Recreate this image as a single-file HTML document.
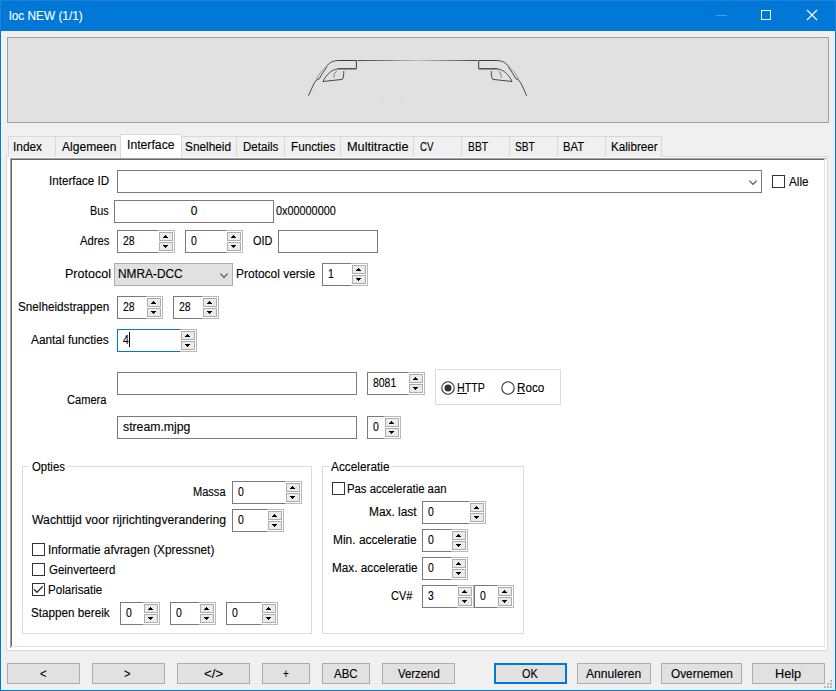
<!DOCTYPE html>
<html><head><meta charset="utf-8"><title>loc NEW</title>
<style>
html,body{margin:0;padding:0;}
body{width:836px;height:691px;position:relative;overflow:hidden;background:#f0f0f0;font-family:"Liberation Sans",sans-serif;font-size:12px;}
.a{position:absolute;}
.t{position:absolute;white-space:nowrap;line-height:14px;font-size:12px;-webkit-text-stroke:0.12px currentColor;}
svg.a{overflow:visible;}
</style></head><body>
<div class="a" style="left:0px;top:0px;width:836px;height:31px;background:#0078d7"></div>
<div class="a" style="left:0px;top:0px;width:1px;height:691px;background:#0078d7"></div>
<div class="a" style="left:835px;top:0px;width:1px;height:691px;background:#0078d7"></div>
<div class="a" style="left:0px;top:690px;width:836px;height:1px;background:#0078d7"></div>
<div class="a" style="left:0px;top:0px;width:836px;height:1px;background:#1e82d9"></div>
<div class="a" style="left:0px;top:0px;width:1px;height:31px;background:#1e82d9"></div>
<div class="a" style="left:835px;top:0px;width:1px;height:31px;background:#1e82d9"></div>
<div class="t" style="left:8.80px;top:8.8px;color:#fff;transform:scaleX(0.9877);transform-origin:0 0">loc NEW (1/1)</div>
<div class="a" style="left:716px;top:15px;width:11px;height:1px;background:#4f9be0"></div>
<div class="a" style="left:761px;top:10px;width:10px;height:10px;box-sizing:border-box;border:1px solid #fff;background:transparent;"></div>
<svg class="a" style="left:806px;top:9px" width="12" height="12"><path d="M1 1 L11 11 M11 1 L1 11" stroke="#fff" stroke-width="1.15"/></svg>
<div class="a" style="left:7px;top:37px;width:822px;height:86px;box-sizing:border-box;border:1px solid #a0a0a0;background:#e1e1e1;"></div>
<svg class="a" style="left:0;top:0" width="836" height="130">
<defs><linearGradient id="cl" x1="357" y1="0" x2="478" y2="0" gradientUnits="userSpaceOnUse">
<stop offset="0" stop-color="#444"/><stop offset="0.5" stop-color="#bdbdbd"/><stop offset="1" stop-color="#444"/></linearGradient></defs>
<path d="M357.5 60.5 H477.7" stroke="url(#cl)" stroke-width="1" fill="none"/>
<g id="half" fill="none" stroke="#3c3c3c" stroke-width="1">
<path d="M338 60.5 H356.4 V68.6"/>
<path d="M356.4 68.8 H338" stroke-width="1.3"/>
<path d="M338 68.9 C332 69.5 326.5 74 323 81.5 L342.3 79.4 C343.5 78 343.8 75 343.8 71" stroke="#484848"/>
<path d="M338 60.5 C333 60.8 329 62.5 326.6 66.4" stroke-width="0.9"/>
<path d="M326.6 66.4 C324.5 68 322 70.5 320.3 72.8 L317.2 77.4 L316.6 79.4" stroke="#8a8a8a" stroke-width="0.9"/>
<path d="M326.8 66.6 C325.5 69 323.5 71.8 321.2 75.3 L319.3 78.8 L317 79.5 L314.4 82.8 C312.5 86.5 310.5 91 308.5 95.7" stroke-width="0.95"/>
<path d="M336.8 71 C334.8 72.3 333.9 74 333.9 77.6" stroke="#707070" stroke-width="0.9"/>
</g>
<use href="#half" transform="translate(835.1,0) scale(-1,1)"/>
</svg>
<div class="a" style="left:381px;top:98px;width:5px;height:1px;background:#dadada"></div>
<div class="a" style="left:398px;top:98px;width:5px;height:1px;background:#dadada"></div>
<div class="a" style="left:6px;top:156px;width:822px;height:495px;box-sizing:border-box;border:1px solid #d9d9d9;background:#fff;"></div>
<div class="a" style="left:8px;top:136px;width:48px;height:21px;box-sizing:border-box;border:1px solid #d9d9d9;border-bottom:none;background:#f0f0f0"></div>
<div class="t" style="left:13.30px;top:139.8px;color:#000;transform:scaleX(0.9893);transform-origin:0 0">Index</div>
<div class="a" style="left:55px;top:136px;width:66px;height:21px;box-sizing:border-box;border:1px solid #d9d9d9;border-bottom:none;background:#f0f0f0"></div>
<div class="t" style="left:62.00px;top:139.8px;color:#000;transform:scaleX(1.0057);transform-origin:0 0">Algemeen</div>
<div class="a" style="left:181px;top:136px;width:56px;height:21px;box-sizing:border-box;border:1px solid #d9d9d9;border-bottom:none;background:#f0f0f0"></div>
<div class="t" style="left:185.20px;top:139.8px;color:#000;transform:scaleX(0.9867);transform-origin:0 0">Snelheid</div>
<div class="a" style="left:236px;top:136px;width:49px;height:21px;box-sizing:border-box;border:1px solid #d9d9d9;border-bottom:none;background:#f0f0f0"></div>
<div class="t" style="left:242.50px;top:139.8px;color:#000;transform:scaleX(0.9639);transform-origin:0 0">Details</div>
<div class="a" style="left:284px;top:136px;width:57px;height:21px;box-sizing:border-box;border:1px solid #d9d9d9;border-bottom:none;background:#f0f0f0"></div>
<div class="t" style="left:290.70px;top:139.8px;color:#000;transform:scaleX(0.9773);transform-origin:0 0">Functies</div>
<div class="a" style="left:340px;top:136px;width:74px;height:21px;box-sizing:border-box;border:1px solid #d9d9d9;border-bottom:none;background:#f0f0f0"></div>
<div class="t" style="left:346.60px;top:139.8px;color:#000;transform:scaleX(1.0596);transform-origin:0 0">Multitractie</div>
<div class="a" style="left:413px;top:136px;width:49px;height:21px;box-sizing:border-box;border:1px solid #d9d9d9;border-bottom:none;background:#f0f0f0"></div>
<div class="t" style="left:420.40px;top:139.8px;color:#000;transform:scaleX(0.8118);transform-origin:0 0">CV</div>
<div class="a" style="left:461px;top:136px;width:49px;height:21px;box-sizing:border-box;border:1px solid #d9d9d9;border-bottom:none;background:#f0f0f0"></div>
<div class="t" style="left:468.00px;top:139.8px;color:#000;transform:scaleX(0.8591);transform-origin:0 0">BBT</div>
<div class="a" style="left:509px;top:136px;width:49px;height:21px;box-sizing:border-box;border:1px solid #d9d9d9;border-bottom:none;background:#f0f0f0"></div>
<div class="t" style="left:514.90px;top:139.8px;color:#000;transform:scaleX(0.8500);transform-origin:0 0">SBT</div>
<div class="a" style="left:557px;top:136px;width:49px;height:21px;box-sizing:border-box;border:1px solid #d9d9d9;border-bottom:none;background:#f0f0f0"></div>
<div class="t" style="left:563.40px;top:139.8px;color:#000;transform:scaleX(0.9381);transform-origin:0 0">BAT</div>
<div class="a" style="left:605px;top:136px;width:57px;height:21px;box-sizing:border-box;border:1px solid #d9d9d9;border-bottom:none;background:#f0f0f0"></div>
<div class="t" style="left:611.30px;top:139.8px;color:#000;transform:scaleX(0.9723);transform-origin:0 0">Kalibreer</div>
<div class="a" style="left:120px;top:134px;width:62px;height:24px;box-sizing:border-box;border:1px solid #d9d9d9;border-bottom:none;background:#fff"></div>
<div class="t" style="left:127.20px;top:137.8px;color:#000;transform:scaleX(1.0178);transform-origin:0 0">Interface</div>
<div class="a" style="left:10px;top:158px;width:816px;height:490px;box-sizing:border-box;border-top:2px solid #696969;border-left:2px solid #696969;border-right:1px solid #fff;border-bottom:1px solid #fff;background:#fff"></div>
<div class="a" style="left:10px;top:158px;width:816px;height:1px;background:#a0a0a0"></div>
<div class="a" style="left:10px;top:158px;width:1px;height:490px;background:#a0a0a0"></div>
<div class="a" style="left:824px;top:159px;width:1px;height:488px;background:#e3e3e3"></div>
<div class="a" style="left:11px;top:646px;width:814px;height:1px;background:#e3e3e3"></div>
<div class="t" style="left:49.20px;top:173.8px;color:#000;transform:scaleX(0.9689);transform-origin:0 0">Interface ID</div>
<div class="a" style="left:117px;top:170px;width:645px;height:23px;box-sizing:border-box;border:1px solid #7a7a7a;background:#fff;"></div>
<svg class="a" style="left:749px;top:179.5px" width="9" height="6"><path d="M0.4 0.6 L4.0 4.4 L7.6 0.6" fill="none" stroke="#555" stroke-width="1.25"/></svg>
<div class="a" style="left:772px;top:175px;width:13px;height:13px;box-sizing:border-box;border:1px solid #333;background:#fff;"></div>
<div class="t" style="left:788.50px;top:174.8px;color:#000;transform:scaleX(0.9750);transform-origin:0 0">Alle</div>
<div class="t" style="left:90.30px;top:203.8px;color:#000;transform:scaleX(0.9000);transform-origin:0 0">Bus</div>
<div class="a" style="left:114px;top:200px;width:160px;height:23px;box-sizing:border-box;border:1px solid #7a7a7a;background:#fff;"></div>
<div class="t" style="left:-6px;width:400px;top:203.8px;text-align:center;color:#000;">0</div>
<div class="t" style="left:276.30px;top:203.8px;color:#000;transform:scaleX(0.9045);transform-origin:0 0">0x00000000</div>
<div class="t" style="left:80.00px;top:233.8px;color:#000;transform:scaleX(0.9355);transform-origin:0 0">Adres</div>
<div class="a" style="left:117px;top:230px;width:58px;height:23px;background:#fff"></div>
<div class="a" style="left:117px;top:230px;width:41px;height:1px;background:#7a7a7a"></div>
<div class="a" style="left:117px;top:252px;width:41px;height:1px;background:#7a7a7a"></div>
<div class="a" style="left:117px;top:230px;width:1px;height:23px;background:#7a7a7a"></div>
<div class="a" style="left:158px;top:230px;width:17px;height:1px;background:#b9b9b9"></div>
<div class="a" style="left:158px;top:252px;width:17px;height:1px;background:#b9b9b9"></div>
<div class="a" style="left:174px;top:230px;width:1px;height:23px;background:#b9b9b9"></div>
<div class="a" style="left:159px;top:232px;width:14px;height:9px;box-sizing:border-box;border:1px solid #adadad;background:#ebebeb;"></div>
<div class="a" style="left:159px;top:242px;width:14px;height:9px;box-sizing:border-box;border:1px solid #adadad;background:#ebebeb;"></div>
<div class="a" style="left:165px;top:235px;width:1px;height:1px;background:#000"></div>
<div class="a" style="left:164px;top:236px;width:3px;height:1px;background:#000"></div>
<div class="a" style="left:163px;top:237px;width:5px;height:1px;background:#000"></div>
<div class="a" style="left:163px;top:245px;width:5px;height:1px;background:#000"></div>
<div class="a" style="left:164px;top:246px;width:3px;height:1px;background:#000"></div>
<div class="a" style="left:165px;top:247px;width:1px;height:1px;background:#000"></div>
<div class="t" style="left:123px;top:233.8px;color:#000;transform:scaleX(0.87);transform-origin:0 0">28</div>
<div class="a" style="left:185px;top:230px;width:58px;height:23px;background:#fff"></div>
<div class="a" style="left:185px;top:230px;width:41px;height:1px;background:#7a7a7a"></div>
<div class="a" style="left:185px;top:252px;width:41px;height:1px;background:#7a7a7a"></div>
<div class="a" style="left:185px;top:230px;width:1px;height:23px;background:#7a7a7a"></div>
<div class="a" style="left:226px;top:230px;width:17px;height:1px;background:#b9b9b9"></div>
<div class="a" style="left:226px;top:252px;width:17px;height:1px;background:#b9b9b9"></div>
<div class="a" style="left:242px;top:230px;width:1px;height:23px;background:#b9b9b9"></div>
<div class="a" style="left:227px;top:232px;width:14px;height:9px;box-sizing:border-box;border:1px solid #adadad;background:#ebebeb;"></div>
<div class="a" style="left:227px;top:242px;width:14px;height:9px;box-sizing:border-box;border:1px solid #adadad;background:#ebebeb;"></div>
<div class="a" style="left:233px;top:235px;width:1px;height:1px;background:#000"></div>
<div class="a" style="left:232px;top:236px;width:3px;height:1px;background:#000"></div>
<div class="a" style="left:231px;top:237px;width:5px;height:1px;background:#000"></div>
<div class="a" style="left:231px;top:245px;width:5px;height:1px;background:#000"></div>
<div class="a" style="left:232px;top:246px;width:3px;height:1px;background:#000"></div>
<div class="a" style="left:233px;top:247px;width:1px;height:1px;background:#000"></div>
<div class="t" style="left:191px;top:233.8px;color:#000;transform:scaleX(0.87);transform-origin:0 0">0</div>
<div class="t" style="left:253.40px;top:233.8px;color:#000;transform:scaleX(0.9048);transform-origin:0 0">OID</div>
<div class="a" style="left:278px;top:230px;width:100px;height:23px;box-sizing:border-box;border:1px solid #7a7a7a;background:#fff;"></div>
<div class="t" style="left:64.50px;top:266.8px;color:#000;transform:scaleX(1.0429);transform-origin:0 0">Protocol</div>
<div class="a" style="left:114px;top:263px;width:119px;height:23px;box-sizing:border-box;border:1px solid #adadad;background:#e1e1e1;"></div>
<div class="t" style="left:117.60px;top:266.8px;color:#000;transform:scaleX(0.9891);transform-origin:0 0">NMRA-DCC</div>
<svg class="a" style="left:220px;top:272.5px" width="9" height="6"><path d="M0.4 0.6 L4.0 4.4 L7.6 0.6" fill="none" stroke="#555" stroke-width="1.25"/></svg>
<div class="t" style="left:236.00px;top:266.8px;color:#000;transform:scaleX(0.9974);transform-origin:0 0">Protocol versie</div>
<div class="a" style="left:322px;top:263px;width:46px;height:23px;background:#fff"></div>
<div class="a" style="left:322px;top:263px;width:29px;height:1px;background:#7a7a7a"></div>
<div class="a" style="left:322px;top:285px;width:29px;height:1px;background:#7a7a7a"></div>
<div class="a" style="left:322px;top:263px;width:1px;height:23px;background:#7a7a7a"></div>
<div class="a" style="left:351px;top:263px;width:17px;height:1px;background:#b9b9b9"></div>
<div class="a" style="left:351px;top:285px;width:17px;height:1px;background:#b9b9b9"></div>
<div class="a" style="left:367px;top:263px;width:1px;height:23px;background:#b9b9b9"></div>
<div class="a" style="left:352px;top:265px;width:14px;height:9px;box-sizing:border-box;border:1px solid #adadad;background:#ebebeb;"></div>
<div class="a" style="left:352px;top:275px;width:14px;height:9px;box-sizing:border-box;border:1px solid #adadad;background:#ebebeb;"></div>
<div class="a" style="left:358px;top:268px;width:1px;height:1px;background:#000"></div>
<div class="a" style="left:357px;top:269px;width:3px;height:1px;background:#000"></div>
<div class="a" style="left:356px;top:270px;width:5px;height:1px;background:#000"></div>
<div class="a" style="left:356px;top:278px;width:5px;height:1px;background:#000"></div>
<div class="a" style="left:357px;top:279px;width:3px;height:1px;background:#000"></div>
<div class="a" style="left:358px;top:280px;width:1px;height:1px;background:#000"></div>
<div class="t" style="left:328px;top:266.8px;color:#000;transform:scaleX(0.87);transform-origin:0 0">1</div>
<div class="t" style="left:18.20px;top:299.8px;color:#000;transform:scaleX(0.9761);transform-origin:0 0">Snelheidstrappen</div>
<div class="a" style="left:117px;top:296px;width:46px;height:23px;background:#fff"></div>
<div class="a" style="left:117px;top:296px;width:29px;height:1px;background:#7a7a7a"></div>
<div class="a" style="left:117px;top:318px;width:29px;height:1px;background:#7a7a7a"></div>
<div class="a" style="left:117px;top:296px;width:1px;height:23px;background:#7a7a7a"></div>
<div class="a" style="left:146px;top:296px;width:17px;height:1px;background:#b9b9b9"></div>
<div class="a" style="left:146px;top:318px;width:17px;height:1px;background:#b9b9b9"></div>
<div class="a" style="left:162px;top:296px;width:1px;height:23px;background:#b9b9b9"></div>
<div class="a" style="left:147px;top:298px;width:14px;height:9px;box-sizing:border-box;border:1px solid #adadad;background:#ebebeb;"></div>
<div class="a" style="left:147px;top:308px;width:14px;height:9px;box-sizing:border-box;border:1px solid #adadad;background:#ebebeb;"></div>
<div class="a" style="left:153px;top:301px;width:1px;height:1px;background:#000"></div>
<div class="a" style="left:152px;top:302px;width:3px;height:1px;background:#000"></div>
<div class="a" style="left:151px;top:303px;width:5px;height:1px;background:#000"></div>
<div class="a" style="left:151px;top:311px;width:5px;height:1px;background:#000"></div>
<div class="a" style="left:152px;top:312px;width:3px;height:1px;background:#000"></div>
<div class="a" style="left:153px;top:313px;width:1px;height:1px;background:#000"></div>
<div class="t" style="left:123px;top:299.8px;color:#000;transform:scaleX(0.87);transform-origin:0 0">28</div>
<div class="a" style="left:173px;top:296px;width:46px;height:23px;background:#fff"></div>
<div class="a" style="left:173px;top:296px;width:29px;height:1px;background:#7a7a7a"></div>
<div class="a" style="left:173px;top:318px;width:29px;height:1px;background:#7a7a7a"></div>
<div class="a" style="left:173px;top:296px;width:1px;height:23px;background:#7a7a7a"></div>
<div class="a" style="left:202px;top:296px;width:17px;height:1px;background:#b9b9b9"></div>
<div class="a" style="left:202px;top:318px;width:17px;height:1px;background:#b9b9b9"></div>
<div class="a" style="left:218px;top:296px;width:1px;height:23px;background:#b9b9b9"></div>
<div class="a" style="left:203px;top:298px;width:14px;height:9px;box-sizing:border-box;border:1px solid #adadad;background:#ebebeb;"></div>
<div class="a" style="left:203px;top:308px;width:14px;height:9px;box-sizing:border-box;border:1px solid #adadad;background:#ebebeb;"></div>
<div class="a" style="left:209px;top:301px;width:1px;height:1px;background:#000"></div>
<div class="a" style="left:208px;top:302px;width:3px;height:1px;background:#000"></div>
<div class="a" style="left:207px;top:303px;width:5px;height:1px;background:#000"></div>
<div class="a" style="left:207px;top:311px;width:5px;height:1px;background:#000"></div>
<div class="a" style="left:208px;top:312px;width:3px;height:1px;background:#000"></div>
<div class="a" style="left:209px;top:313px;width:1px;height:1px;background:#000"></div>
<div class="t" style="left:179px;top:299.8px;color:#000;transform:scaleX(0.87);transform-origin:0 0">28</div>
<div class="t" style="left:31.00px;top:332.8px;color:#000;transform:scaleX(0.9873);transform-origin:0 0">Aantal functies</div>
<div class="a" style="left:117px;top:329px;width:80px;height:23px;background:#fff"></div>
<div class="a" style="left:117px;top:329px;width:63px;height:1px;background:#0078d7"></div>
<div class="a" style="left:117px;top:351px;width:63px;height:1px;background:#0078d7"></div>
<div class="a" style="left:117px;top:329px;width:1px;height:23px;background:#0078d7"></div>
<div class="a" style="left:180px;top:329px;width:17px;height:1px;background:#b9b9b9"></div>
<div class="a" style="left:180px;top:351px;width:17px;height:1px;background:#b9b9b9"></div>
<div class="a" style="left:196px;top:329px;width:1px;height:23px;background:#b9b9b9"></div>
<div class="a" style="left:181px;top:331px;width:14px;height:9px;box-sizing:border-box;border:1px solid #adadad;background:#ebebeb;"></div>
<div class="a" style="left:181px;top:341px;width:14px;height:9px;box-sizing:border-box;border:1px solid #adadad;background:#ebebeb;"></div>
<div class="a" style="left:187px;top:334px;width:1px;height:1px;background:#000"></div>
<div class="a" style="left:186px;top:335px;width:3px;height:1px;background:#000"></div>
<div class="a" style="left:185px;top:336px;width:5px;height:1px;background:#000"></div>
<div class="a" style="left:185px;top:344px;width:5px;height:1px;background:#000"></div>
<div class="a" style="left:186px;top:345px;width:3px;height:1px;background:#000"></div>
<div class="a" style="left:187px;top:346px;width:1px;height:1px;background:#000"></div>
<div class="t" style="left:123px;top:332.8px;color:#000;transform:scaleX(0.87);transform-origin:0 0">4</div>
<div class="a" style="left:129px;top:332px;width:1px;height:15px;background:#000"></div>
<div class="t" style="left:66.70px;top:392.8px;color:#000;transform:scaleX(0.9233);transform-origin:0 0">Camera</div>
<div class="a" style="left:117px;top:372px;width:240px;height:23px;box-sizing:border-box;border:1px solid #7a7a7a;background:#fff;"></div>
<div class="a" style="left:367px;top:372px;width:58px;height:23px;background:#fff"></div>
<div class="a" style="left:367px;top:372px;width:41px;height:1px;background:#7a7a7a"></div>
<div class="a" style="left:367px;top:394px;width:41px;height:1px;background:#7a7a7a"></div>
<div class="a" style="left:367px;top:372px;width:1px;height:23px;background:#7a7a7a"></div>
<div class="a" style="left:408px;top:372px;width:17px;height:1px;background:#b9b9b9"></div>
<div class="a" style="left:408px;top:394px;width:17px;height:1px;background:#b9b9b9"></div>
<div class="a" style="left:424px;top:372px;width:1px;height:23px;background:#b9b9b9"></div>
<div class="a" style="left:409px;top:374px;width:14px;height:9px;box-sizing:border-box;border:1px solid #adadad;background:#ebebeb;"></div>
<div class="a" style="left:409px;top:384px;width:14px;height:9px;box-sizing:border-box;border:1px solid #adadad;background:#ebebeb;"></div>
<div class="a" style="left:415px;top:377px;width:1px;height:1px;background:#000"></div>
<div class="a" style="left:414px;top:378px;width:3px;height:1px;background:#000"></div>
<div class="a" style="left:413px;top:379px;width:5px;height:1px;background:#000"></div>
<div class="a" style="left:413px;top:387px;width:5px;height:1px;background:#000"></div>
<div class="a" style="left:414px;top:388px;width:3px;height:1px;background:#000"></div>
<div class="a" style="left:415px;top:389px;width:1px;height:1px;background:#000"></div>
<div class="t" style="left:373px;top:375.8px;color:#000;transform:scaleX(0.87);transform-origin:0 0">8081</div>
<div class="a" style="left:435px;top:369px;width:126px;height:36px;box-sizing:border-box;border:1px solid #dcdcdc;background:transparent;"></div>
<svg class="a" style="left:440.5px;top:380.5px" width="14" height="14"><circle cx="7" cy="7" r="6.2" fill="#fff" stroke="#333" stroke-width="1.1"/><circle cx="7" cy="7" r="3.5" fill="#333"/></svg>
<div class="t" style="left:456.70px;top:380.8px;color:#000;transform:scaleX(0.8867);transform-origin:0 0">HTTP</div>
<div class="a" style="left:457px;top:393px;width:10px;height:1px;background:#000"></div>
<svg class="a" style="left:500.5px;top:380.5px" width="14" height="14"><circle cx="7" cy="7" r="6.2" fill="#fff" stroke="#333" stroke-width="1.1"/></svg>
<div class="t" style="left:516.50px;top:380.8px;color:#000;transform:scaleX(0.9741);transform-origin:0 0">Roco</div>
<div class="a" style="left:517px;top:393px;width:8px;height:1px;background:#000"></div>
<div class="a" style="left:117px;top:416px;width:240px;height:23px;box-sizing:border-box;border:1px solid #7a7a7a;background:#fff;"></div>
<div class="t" style="left:123.20px;top:419.8px;color:#000;transform:scaleX(1.0215);transform-origin:0 0">stream.mjpg</div>
<div class="a" style="left:367px;top:416px;width:34px;height:23px;background:#fff"></div>
<div class="a" style="left:367px;top:416px;width:17px;height:1px;background:#7a7a7a"></div>
<div class="a" style="left:367px;top:438px;width:17px;height:1px;background:#7a7a7a"></div>
<div class="a" style="left:367px;top:416px;width:1px;height:23px;background:#7a7a7a"></div>
<div class="a" style="left:384px;top:416px;width:17px;height:1px;background:#b9b9b9"></div>
<div class="a" style="left:384px;top:438px;width:17px;height:1px;background:#b9b9b9"></div>
<div class="a" style="left:400px;top:416px;width:1px;height:23px;background:#b9b9b9"></div>
<div class="a" style="left:385px;top:418px;width:14px;height:9px;box-sizing:border-box;border:1px solid #adadad;background:#ebebeb;"></div>
<div class="a" style="left:385px;top:428px;width:14px;height:9px;box-sizing:border-box;border:1px solid #adadad;background:#ebebeb;"></div>
<div class="a" style="left:391px;top:421px;width:1px;height:1px;background:#000"></div>
<div class="a" style="left:390px;top:422px;width:3px;height:1px;background:#000"></div>
<div class="a" style="left:389px;top:423px;width:5px;height:1px;background:#000"></div>
<div class="a" style="left:389px;top:431px;width:5px;height:1px;background:#000"></div>
<div class="a" style="left:390px;top:432px;width:3px;height:1px;background:#000"></div>
<div class="a" style="left:391px;top:433px;width:1px;height:1px;background:#000"></div>
<div class="t" style="left:373px;top:419.8px;color:#000;transform:scaleX(0.87);transform-origin:0 0">0</div>
<div class="a" style="left:22px;top:466px;width:290px;height:168px;box-sizing:border-box;border:1px solid #dcdcdc;background:transparent;"></div>
<div class="a" style="left:29px;top:460px;width:38px;height:11px;background:#fff"></div>
<div class="t" style="left:31.60px;top:459.8px;color:#000;transform:scaleX(0.9486);transform-origin:0 0">Opties</div>
<div class="t" style="left:193.30px;top:484.8px;color:#000;transform:scaleX(0.9200);transform-origin:0 0">Massa</div>
<div class="a" style="left:232px;top:481px;width:70px;height:23px;background:#fff"></div>
<div class="a" style="left:232px;top:481px;width:53px;height:1px;background:#7a7a7a"></div>
<div class="a" style="left:232px;top:503px;width:53px;height:1px;background:#7a7a7a"></div>
<div class="a" style="left:232px;top:481px;width:1px;height:23px;background:#7a7a7a"></div>
<div class="a" style="left:285px;top:481px;width:17px;height:1px;background:#b9b9b9"></div>
<div class="a" style="left:285px;top:503px;width:17px;height:1px;background:#b9b9b9"></div>
<div class="a" style="left:301px;top:481px;width:1px;height:23px;background:#b9b9b9"></div>
<div class="a" style="left:286px;top:483px;width:14px;height:9px;box-sizing:border-box;border:1px solid #adadad;background:#ebebeb;"></div>
<div class="a" style="left:286px;top:493px;width:14px;height:9px;box-sizing:border-box;border:1px solid #adadad;background:#ebebeb;"></div>
<div class="a" style="left:292px;top:486px;width:1px;height:1px;background:#000"></div>
<div class="a" style="left:291px;top:487px;width:3px;height:1px;background:#000"></div>
<div class="a" style="left:290px;top:488px;width:5px;height:1px;background:#000"></div>
<div class="a" style="left:290px;top:496px;width:5px;height:1px;background:#000"></div>
<div class="a" style="left:291px;top:497px;width:3px;height:1px;background:#000"></div>
<div class="a" style="left:292px;top:498px;width:1px;height:1px;background:#000"></div>
<div class="t" style="left:238px;top:484.8px;color:#000;transform:scaleX(0.87);transform-origin:0 0">0</div>
<div class="t" style="left:32.20px;top:512.8px;color:#000;transform:scaleX(1.0195);transform-origin:0 0">Wachttijd voor rijrichtingverandering</div>
<div class="a" style="left:232px;top:509px;width:52px;height:23px;background:#fff"></div>
<div class="a" style="left:232px;top:509px;width:35px;height:1px;background:#7a7a7a"></div>
<div class="a" style="left:232px;top:531px;width:35px;height:1px;background:#7a7a7a"></div>
<div class="a" style="left:232px;top:509px;width:1px;height:23px;background:#7a7a7a"></div>
<div class="a" style="left:267px;top:509px;width:17px;height:1px;background:#b9b9b9"></div>
<div class="a" style="left:267px;top:531px;width:17px;height:1px;background:#b9b9b9"></div>
<div class="a" style="left:283px;top:509px;width:1px;height:23px;background:#b9b9b9"></div>
<div class="a" style="left:268px;top:511px;width:14px;height:9px;box-sizing:border-box;border:1px solid #adadad;background:#ebebeb;"></div>
<div class="a" style="left:268px;top:521px;width:14px;height:9px;box-sizing:border-box;border:1px solid #adadad;background:#ebebeb;"></div>
<div class="a" style="left:274px;top:514px;width:1px;height:1px;background:#000"></div>
<div class="a" style="left:273px;top:515px;width:3px;height:1px;background:#000"></div>
<div class="a" style="left:272px;top:516px;width:5px;height:1px;background:#000"></div>
<div class="a" style="left:272px;top:524px;width:5px;height:1px;background:#000"></div>
<div class="a" style="left:273px;top:525px;width:3px;height:1px;background:#000"></div>
<div class="a" style="left:274px;top:526px;width:1px;height:1px;background:#000"></div>
<div class="t" style="left:238px;top:512.8px;color:#000;transform:scaleX(0.87);transform-origin:0 0">0</div>
<div class="a" style="left:32px;top:543px;width:13px;height:13px;box-sizing:border-box;border:1px solid #333;background:#fff;"></div>
<div class="t" style="left:47.60px;top:542.8px;color:#000;transform:scaleX(0.9856);transform-origin:0 0">Informatie afvragen (Xpressnet)</div>
<div class="a" style="left:32px;top:563px;width:13px;height:13px;box-sizing:border-box;border:1px solid #333;background:#fff;"></div>
<div class="t" style="left:48.60px;top:562.8px;color:#000;transform:scaleX(0.9551);transform-origin:0 0">Geinverteerd</div>
<div class="a" style="left:32px;top:583px;width:13px;height:13px;box-sizing:border-box;border:1px solid #333;background:#fff;"></div>
<svg class="a" style="left:32px;top:583px" width="13" height="13"><path d="M2 6.2 L5 9.2 L10.7 3.3" fill="none" stroke="#333" stroke-width="1.3"/></svg>
<div class="t" style="left:47.60px;top:582.8px;color:#000;transform:scaleX(0.9673);transform-origin:0 0">Polarisatie</div>
<div class="t" style="left:31.20px;top:605.8px;color:#000;transform:scaleX(0.9750);transform-origin:0 0">Stappen bereik</div>
<div class="a" style="left:120px;top:602px;width:40px;height:23px;background:#fff"></div>
<div class="a" style="left:120px;top:602px;width:23px;height:1px;background:#7a7a7a"></div>
<div class="a" style="left:120px;top:624px;width:23px;height:1px;background:#7a7a7a"></div>
<div class="a" style="left:120px;top:602px;width:1px;height:23px;background:#7a7a7a"></div>
<div class="a" style="left:143px;top:602px;width:17px;height:1px;background:#b9b9b9"></div>
<div class="a" style="left:143px;top:624px;width:17px;height:1px;background:#b9b9b9"></div>
<div class="a" style="left:159px;top:602px;width:1px;height:23px;background:#b9b9b9"></div>
<div class="a" style="left:144px;top:604px;width:14px;height:9px;box-sizing:border-box;border:1px solid #adadad;background:#ebebeb;"></div>
<div class="a" style="left:144px;top:614px;width:14px;height:9px;box-sizing:border-box;border:1px solid #adadad;background:#ebebeb;"></div>
<div class="a" style="left:150px;top:607px;width:1px;height:1px;background:#000"></div>
<div class="a" style="left:149px;top:608px;width:3px;height:1px;background:#000"></div>
<div class="a" style="left:148px;top:609px;width:5px;height:1px;background:#000"></div>
<div class="a" style="left:148px;top:617px;width:5px;height:1px;background:#000"></div>
<div class="a" style="left:149px;top:618px;width:3px;height:1px;background:#000"></div>
<div class="a" style="left:150px;top:619px;width:1px;height:1px;background:#000"></div>
<div class="t" style="left:126px;top:605.8px;color:#000;transform:scaleX(0.87);transform-origin:0 0">0</div>
<div class="a" style="left:170px;top:602px;width:46px;height:23px;background:#fff"></div>
<div class="a" style="left:170px;top:602px;width:29px;height:1px;background:#7a7a7a"></div>
<div class="a" style="left:170px;top:624px;width:29px;height:1px;background:#7a7a7a"></div>
<div class="a" style="left:170px;top:602px;width:1px;height:23px;background:#7a7a7a"></div>
<div class="a" style="left:199px;top:602px;width:17px;height:1px;background:#b9b9b9"></div>
<div class="a" style="left:199px;top:624px;width:17px;height:1px;background:#b9b9b9"></div>
<div class="a" style="left:215px;top:602px;width:1px;height:23px;background:#b9b9b9"></div>
<div class="a" style="left:200px;top:604px;width:14px;height:9px;box-sizing:border-box;border:1px solid #adadad;background:#ebebeb;"></div>
<div class="a" style="left:200px;top:614px;width:14px;height:9px;box-sizing:border-box;border:1px solid #adadad;background:#ebebeb;"></div>
<div class="a" style="left:206px;top:607px;width:1px;height:1px;background:#000"></div>
<div class="a" style="left:205px;top:608px;width:3px;height:1px;background:#000"></div>
<div class="a" style="left:204px;top:609px;width:5px;height:1px;background:#000"></div>
<div class="a" style="left:204px;top:617px;width:5px;height:1px;background:#000"></div>
<div class="a" style="left:205px;top:618px;width:3px;height:1px;background:#000"></div>
<div class="a" style="left:206px;top:619px;width:1px;height:1px;background:#000"></div>
<div class="t" style="left:176px;top:605.8px;color:#000;transform:scaleX(0.87);transform-origin:0 0">0</div>
<div class="a" style="left:226px;top:602px;width:52px;height:23px;background:#fff"></div>
<div class="a" style="left:226px;top:602px;width:35px;height:1px;background:#7a7a7a"></div>
<div class="a" style="left:226px;top:624px;width:35px;height:1px;background:#7a7a7a"></div>
<div class="a" style="left:226px;top:602px;width:1px;height:23px;background:#7a7a7a"></div>
<div class="a" style="left:261px;top:602px;width:17px;height:1px;background:#b9b9b9"></div>
<div class="a" style="left:261px;top:624px;width:17px;height:1px;background:#b9b9b9"></div>
<div class="a" style="left:277px;top:602px;width:1px;height:23px;background:#b9b9b9"></div>
<div class="a" style="left:262px;top:604px;width:14px;height:9px;box-sizing:border-box;border:1px solid #adadad;background:#ebebeb;"></div>
<div class="a" style="left:262px;top:614px;width:14px;height:9px;box-sizing:border-box;border:1px solid #adadad;background:#ebebeb;"></div>
<div class="a" style="left:268px;top:607px;width:1px;height:1px;background:#000"></div>
<div class="a" style="left:267px;top:608px;width:3px;height:1px;background:#000"></div>
<div class="a" style="left:266px;top:609px;width:5px;height:1px;background:#000"></div>
<div class="a" style="left:266px;top:617px;width:5px;height:1px;background:#000"></div>
<div class="a" style="left:267px;top:618px;width:3px;height:1px;background:#000"></div>
<div class="a" style="left:268px;top:619px;width:1px;height:1px;background:#000"></div>
<div class="t" style="left:232px;top:605.8px;color:#000;transform:scaleX(0.87);transform-origin:0 0">0</div>
<div class="a" style="left:322px;top:466px;width:202px;height:168px;box-sizing:border-box;border:1px solid #dcdcdc;background:transparent;"></div>
<div class="a" style="left:329px;top:460px;width:63px;height:11px;background:#fff"></div>
<div class="t" style="left:331.30px;top:459.8px;color:#000;transform:scaleX(0.9864);transform-origin:0 0">Acceleratie</div>
<div class="a" style="left:332px;top:482px;width:13px;height:13px;box-sizing:border-box;border:1px solid #333;background:#fff;"></div>
<div class="t" style="left:347.40px;top:481.8px;color:#000;transform:scaleX(0.9442);transform-origin:0 0">Pas acceleratie aan</div>
<div class="t" style="left:369.30px;top:504.8px;color:#000;transform:scaleX(0.9894);transform-origin:0 0">Max. last</div>
<div class="a" style="left:422px;top:501px;width:64px;height:23px;background:#fff"></div>
<div class="a" style="left:422px;top:501px;width:47px;height:1px;background:#7a7a7a"></div>
<div class="a" style="left:422px;top:523px;width:47px;height:1px;background:#7a7a7a"></div>
<div class="a" style="left:422px;top:501px;width:1px;height:23px;background:#7a7a7a"></div>
<div class="a" style="left:469px;top:501px;width:17px;height:1px;background:#b9b9b9"></div>
<div class="a" style="left:469px;top:523px;width:17px;height:1px;background:#b9b9b9"></div>
<div class="a" style="left:485px;top:501px;width:1px;height:23px;background:#b9b9b9"></div>
<div class="a" style="left:470px;top:503px;width:14px;height:9px;box-sizing:border-box;border:1px solid #adadad;background:#ebebeb;"></div>
<div class="a" style="left:470px;top:513px;width:14px;height:9px;box-sizing:border-box;border:1px solid #adadad;background:#ebebeb;"></div>
<div class="a" style="left:476px;top:506px;width:1px;height:1px;background:#000"></div>
<div class="a" style="left:475px;top:507px;width:3px;height:1px;background:#000"></div>
<div class="a" style="left:474px;top:508px;width:5px;height:1px;background:#000"></div>
<div class="a" style="left:474px;top:516px;width:5px;height:1px;background:#000"></div>
<div class="a" style="left:475px;top:517px;width:3px;height:1px;background:#000"></div>
<div class="a" style="left:476px;top:518px;width:1px;height:1px;background:#000"></div>
<div class="t" style="left:428px;top:504.8px;color:#000;transform:scaleX(0.87);transform-origin:0 0">0</div>
<div class="t" style="left:333.20px;top:532.8px;color:#000;transform:scaleX(0.9952);transform-origin:0 0">Min. acceleratie</div>
<div class="a" style="left:422px;top:529px;width:46px;height:23px;background:#fff"></div>
<div class="a" style="left:422px;top:529px;width:29px;height:1px;background:#7a7a7a"></div>
<div class="a" style="left:422px;top:551px;width:29px;height:1px;background:#7a7a7a"></div>
<div class="a" style="left:422px;top:529px;width:1px;height:23px;background:#7a7a7a"></div>
<div class="a" style="left:451px;top:529px;width:17px;height:1px;background:#b9b9b9"></div>
<div class="a" style="left:451px;top:551px;width:17px;height:1px;background:#b9b9b9"></div>
<div class="a" style="left:467px;top:529px;width:1px;height:23px;background:#b9b9b9"></div>
<div class="a" style="left:452px;top:531px;width:14px;height:9px;box-sizing:border-box;border:1px solid #adadad;background:#ebebeb;"></div>
<div class="a" style="left:452px;top:541px;width:14px;height:9px;box-sizing:border-box;border:1px solid #adadad;background:#ebebeb;"></div>
<div class="a" style="left:458px;top:534px;width:1px;height:1px;background:#000"></div>
<div class="a" style="left:457px;top:535px;width:3px;height:1px;background:#000"></div>
<div class="a" style="left:456px;top:536px;width:5px;height:1px;background:#000"></div>
<div class="a" style="left:456px;top:544px;width:5px;height:1px;background:#000"></div>
<div class="a" style="left:457px;top:545px;width:3px;height:1px;background:#000"></div>
<div class="a" style="left:458px;top:546px;width:1px;height:1px;background:#000"></div>
<div class="t" style="left:428px;top:532.8px;color:#000;transform:scaleX(0.87);transform-origin:0 0">0</div>
<div class="t" style="left:331.60px;top:560.8px;color:#000;transform:scaleX(0.9791);transform-origin:0 0">Max. acceleratie</div>
<div class="a" style="left:422px;top:557px;width:46px;height:23px;background:#fff"></div>
<div class="a" style="left:422px;top:557px;width:29px;height:1px;background:#7a7a7a"></div>
<div class="a" style="left:422px;top:579px;width:29px;height:1px;background:#7a7a7a"></div>
<div class="a" style="left:422px;top:557px;width:1px;height:23px;background:#7a7a7a"></div>
<div class="a" style="left:451px;top:557px;width:17px;height:1px;background:#b9b9b9"></div>
<div class="a" style="left:451px;top:579px;width:17px;height:1px;background:#b9b9b9"></div>
<div class="a" style="left:467px;top:557px;width:1px;height:23px;background:#b9b9b9"></div>
<div class="a" style="left:452px;top:559px;width:14px;height:9px;box-sizing:border-box;border:1px solid #adadad;background:#ebebeb;"></div>
<div class="a" style="left:452px;top:569px;width:14px;height:9px;box-sizing:border-box;border:1px solid #adadad;background:#ebebeb;"></div>
<div class="a" style="left:458px;top:562px;width:1px;height:1px;background:#000"></div>
<div class="a" style="left:457px;top:563px;width:3px;height:1px;background:#000"></div>
<div class="a" style="left:456px;top:564px;width:5px;height:1px;background:#000"></div>
<div class="a" style="left:456px;top:572px;width:5px;height:1px;background:#000"></div>
<div class="a" style="left:457px;top:573px;width:3px;height:1px;background:#000"></div>
<div class="a" style="left:458px;top:574px;width:1px;height:1px;background:#000"></div>
<div class="t" style="left:428px;top:560.8px;color:#000;transform:scaleX(0.87);transform-origin:0 0">0</div>
<div class="t" style="left:390.50px;top:588.8px;color:#000;transform:scaleX(0.9125);transform-origin:0 0">CV#</div>
<div class="a" style="left:422px;top:585px;width:52px;height:23px;background:#fff"></div>
<div class="a" style="left:422px;top:585px;width:35px;height:1px;background:#7a7a7a"></div>
<div class="a" style="left:422px;top:607px;width:35px;height:1px;background:#7a7a7a"></div>
<div class="a" style="left:422px;top:585px;width:1px;height:23px;background:#7a7a7a"></div>
<div class="a" style="left:457px;top:585px;width:17px;height:1px;background:#b9b9b9"></div>
<div class="a" style="left:457px;top:607px;width:17px;height:1px;background:#b9b9b9"></div>
<div class="a" style="left:473px;top:585px;width:1px;height:23px;background:#b9b9b9"></div>
<div class="a" style="left:458px;top:587px;width:14px;height:9px;box-sizing:border-box;border:1px solid #adadad;background:#ebebeb;"></div>
<div class="a" style="left:458px;top:597px;width:14px;height:9px;box-sizing:border-box;border:1px solid #adadad;background:#ebebeb;"></div>
<div class="a" style="left:464px;top:590px;width:1px;height:1px;background:#000"></div>
<div class="a" style="left:463px;top:591px;width:3px;height:1px;background:#000"></div>
<div class="a" style="left:462px;top:592px;width:5px;height:1px;background:#000"></div>
<div class="a" style="left:462px;top:600px;width:5px;height:1px;background:#000"></div>
<div class="a" style="left:463px;top:601px;width:3px;height:1px;background:#000"></div>
<div class="a" style="left:464px;top:602px;width:1px;height:1px;background:#000"></div>
<div class="t" style="left:428px;top:588.8px;color:#000;transform:scaleX(0.87);transform-origin:0 0">3</div>
<div class="a" style="left:474px;top:585px;width:40px;height:23px;background:#fff"></div>
<div class="a" style="left:474px;top:585px;width:23px;height:1px;background:#7a7a7a"></div>
<div class="a" style="left:474px;top:607px;width:23px;height:1px;background:#7a7a7a"></div>
<div class="a" style="left:474px;top:585px;width:1px;height:23px;background:#7a7a7a"></div>
<div class="a" style="left:497px;top:585px;width:17px;height:1px;background:#b9b9b9"></div>
<div class="a" style="left:497px;top:607px;width:17px;height:1px;background:#b9b9b9"></div>
<div class="a" style="left:513px;top:585px;width:1px;height:23px;background:#b9b9b9"></div>
<div class="a" style="left:498px;top:587px;width:14px;height:9px;box-sizing:border-box;border:1px solid #adadad;background:#ebebeb;"></div>
<div class="a" style="left:498px;top:597px;width:14px;height:9px;box-sizing:border-box;border:1px solid #adadad;background:#ebebeb;"></div>
<div class="a" style="left:504px;top:590px;width:1px;height:1px;background:#000"></div>
<div class="a" style="left:503px;top:591px;width:3px;height:1px;background:#000"></div>
<div class="a" style="left:502px;top:592px;width:5px;height:1px;background:#000"></div>
<div class="a" style="left:502px;top:600px;width:5px;height:1px;background:#000"></div>
<div class="a" style="left:503px;top:601px;width:3px;height:1px;background:#000"></div>
<div class="a" style="left:504px;top:602px;width:1px;height:1px;background:#000"></div>
<div class="t" style="left:480px;top:588.8px;color:#000;transform:scaleX(0.87);transform-origin:0 0">0</div>
<div class="a" style="left:7px;top:663px;width:73px;height:21px;box-sizing:border-box;border:1px solid #adadad;background:#e1e1e1;"></div>
<div class="t" style="left:40.00px;top:666.8px;color:#000;transform:scaleX(0.9286);transform-origin:0 0">&lt;</div>
<div class="a" style="left:92px;top:663px;width:73px;height:21px;box-sizing:border-box;border:1px solid #adadad;background:#e1e1e1;"></div>
<div class="t" style="left:124.00px;top:666.8px;color:#000;transform:scaleX(0.9286);transform-origin:0 0">&gt;</div>
<div class="a" style="left:177px;top:663px;width:73px;height:21px;box-sizing:border-box;border:1px solid #adadad;background:#e1e1e1;"></div>
<div class="t" style="left:203.90px;top:666.8px;color:#000;transform:scaleX(1.1000);transform-origin:0 0">&lt;/&gt;</div>
<div class="a" style="left:262px;top:663px;width:48px;height:21px;box-sizing:border-box;border:1px solid #adadad;background:#e1e1e1;"></div>
<div class="t" style="left:282.90px;top:666.8px;color:#000;transform:scaleX(0.8286);transform-origin:0 0">+</div>
<div class="a" style="left:322px;top:663px;width:48px;height:21px;box-sizing:border-box;border:1px solid #adadad;background:#e1e1e1;"></div>
<div class="t" style="left:334.20px;top:666.8px;color:#000;transform:scaleX(0.9542);transform-origin:0 0">ABC</div>
<div class="a" style="left:382px;top:663px;width:73px;height:21px;box-sizing:border-box;border:1px solid #adadad;background:#e1e1e1;"></div>
<div class="t" style="left:397.90px;top:666.8px;color:#000;transform:scaleX(0.9488);transform-origin:0 0">Verzend</div>
<div class="a" style="left:494px;top:663px;width:73px;height:21px;box-sizing:border-box;border:1px solid #0078d7;background:#e1e1e1;border-width:2px"></div>
<div class="t" style="left:522.40px;top:666.8px;color:#000;transform:scaleX(0.9000);transform-origin:0 0">OK</div>
<div class="a" style="left:577px;top:663px;width:74px;height:21px;box-sizing:border-box;border:1px solid #adadad;background:#e1e1e1;"></div>
<div class="t" style="left:586.00px;top:666.8px;color:#000;transform:scaleX(1.0074);transform-origin:0 0">Annuleren</div>
<div class="a" style="left:661px;top:663px;width:81px;height:21px;box-sizing:border-box;border:1px solid #adadad;background:#e1e1e1;"></div>
<div class="t" style="left:670.50px;top:666.8px;color:#000;transform:scaleX(0.9855);transform-origin:0 0">Overnemen</div>
<div class="a" style="left:752px;top:663px;width:73px;height:21px;box-sizing:border-box;border:1px solid #adadad;background:#e1e1e1;"></div>
<div class="t" style="left:775.40px;top:666.8px;color:#000;transform:scaleX(1.0609);transform-origin:0 0">Help</div>
<div class="a" style="left:830px;top:680px;width:2px;height:2px;background:#b8b8b8"></div>
<div class="a" style="left:827px;top:683px;width:2px;height:2px;background:#b8b8b8"></div>
<div class="a" style="left:830px;top:683px;width:2px;height:2px;background:#b8b8b8"></div>
<div class="a" style="left:824px;top:686px;width:2px;height:2px;background:#b8b8b8"></div>
<div class="a" style="left:827px;top:686px;width:2px;height:2px;background:#b8b8b8"></div>
<div class="a" style="left:830px;top:686px;width:2px;height:2px;background:#b8b8b8"></div>
</body></html>
